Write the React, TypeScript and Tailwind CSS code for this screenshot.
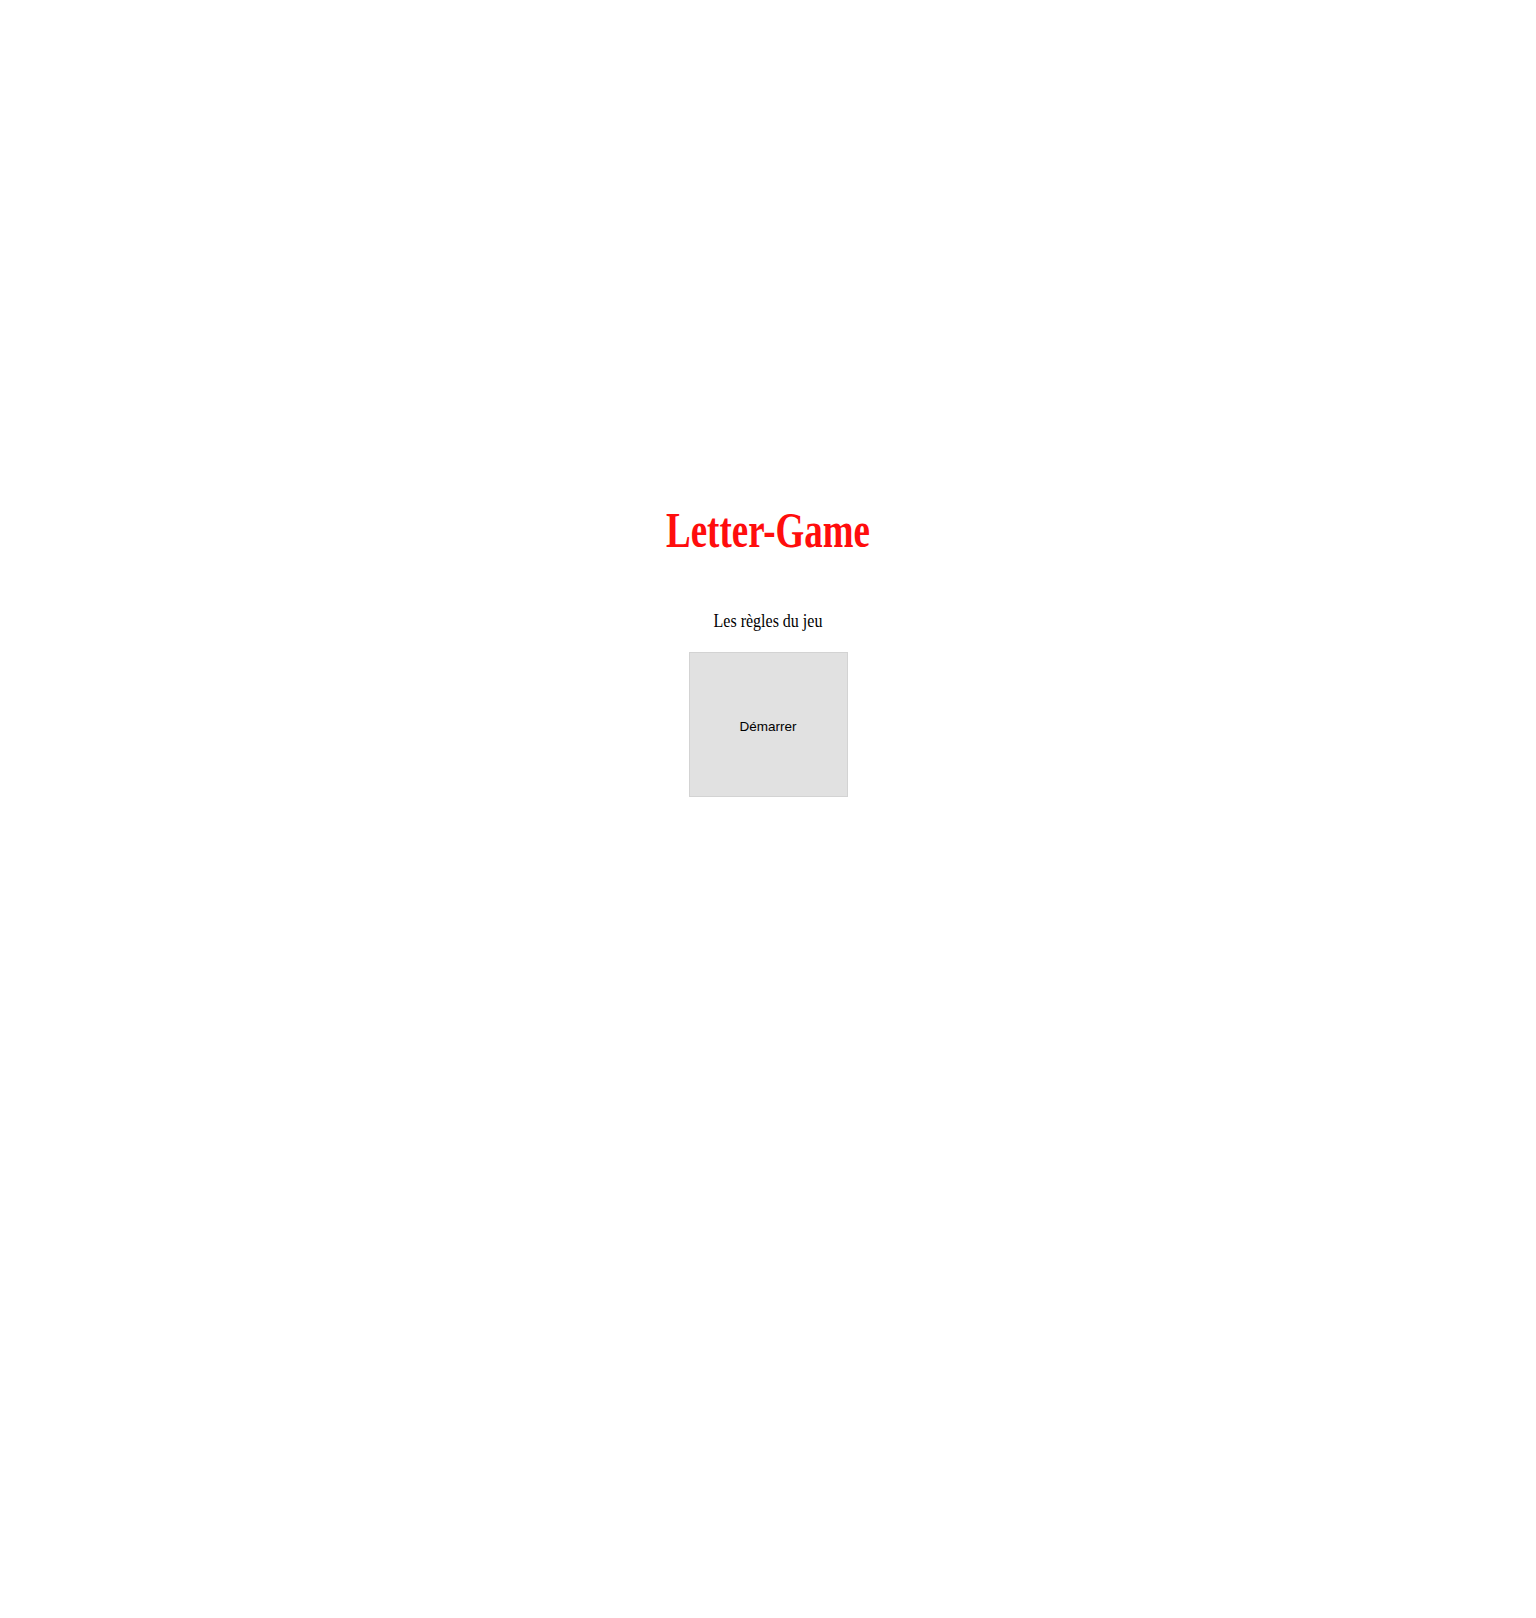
export default function App() {
  return (
    <main className="min-h-screen bg-white flex flex-col items-center pt-[511px]">
      <h1 className="h-[36px] text-[37px] leading-none font-bold text-[#ff0d0d] scale-y-[1.36] font-['Liberation_Serif','Times_New_Roman',serif]">
        Letter-Game
      </h1>
      <p className="mt-[66px] h-[16px] text-[16px] leading-none text-black scale-y-[1.12] font-['Liberation_Serif','Times_New_Roman',serif]">
        Les règles du jeu
      </p>
      <button className="mt-[23px] w-[159px] h-[145px] pt-[5px] bg-[#e1e1e1] border border-[#d3d3d3] text-[13.5px] text-black font-['Liberation_Sans',Arial,sans-serif]">
        Démarrer
      </button>
    </main>
  );
}
